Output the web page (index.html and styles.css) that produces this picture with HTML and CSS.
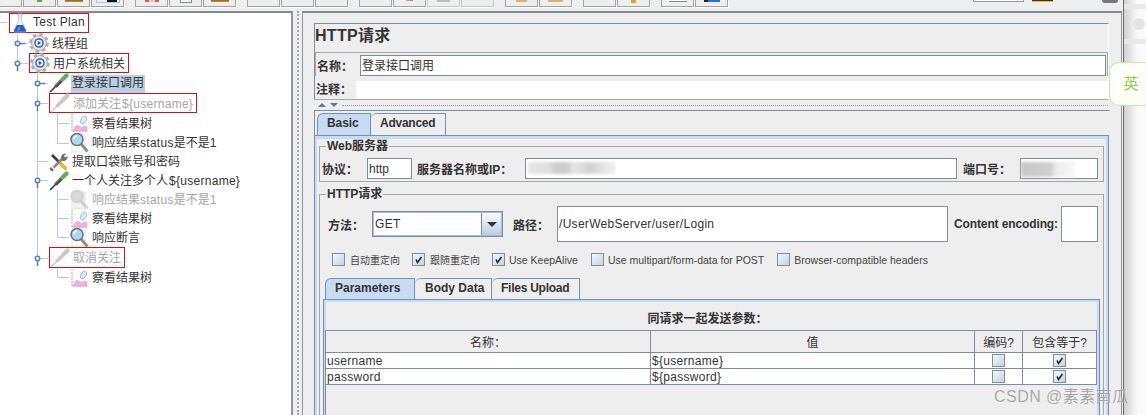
FILE: index.html
```html
<!DOCTYPE html>
<html lang="zh">
<head>
<meta charset="utf-8">
<title>HTTP请求</title>
<link rel="stylesheet" href="styles.css">
</head>
<body>
<svg class="sprite" aria-hidden="true">
  <symbol id="i-flask" viewBox="0 0 20 20">
    <path d="M7.500 1h5v1h-1v6l4.500 9c.6 1.200 0 2-1.500 2h-9C4 19 3.400 18.200 4 17l4.500-9V2h-1z" fill="#eef2f7" stroke="#b8c0cb" stroke-width=".8"/>
    <path d="M7 12h6l3 5.500c.3.800-.2 1.300-1 1.300H5c-.8 0-1.300-.5-1-1.300z" fill="#1c5fc9"/>
    <path d="M8.500 14h2l-1 3.500H7z" fill="#5c9ae8"/>
  </symbol>
  <symbol id="i-gear" viewBox="0 0 20 20">
    <circle cx="10" cy="10" r="8.200" fill="none" stroke="#b0b0b0" stroke-width="3.400" stroke-dasharray="3.400 3.040"/>
    <circle cx="10" cy="10" r="7.500" fill="#e4e4e4" stroke="#9a9a9a" stroke-width=".8"/>
    <circle cx="10" cy="10" r="4.800" fill="#3c68a6"/>
    <circle cx="10" cy="10" r="3.300" fill="#e3ecf8"/>
    <path d="M8.800 8l3.200 2-3.200 2z" fill="#2b568f"/>
  </symbol>
  <symbol id="i-pipette" viewBox="0 0 20 20">
    <path class="pp-needle" d="M1 19l7-7"/>
    <path class="pp-body" d="M6.500 13.500l6-6"/>
    <path class="pp-glint" d="M6 12.500l5-5"/>
    <path class="pp-bulb" d="M13.500 6.500l4-4"/>
  </symbol>
  <symbol id="i-tools" viewBox="0 0 20 20">
    <path d="M3 3l14 14" stroke="#3b3b3b" stroke-width="2.600" fill="none"/>
    <path d="M10.500 10.500l7 7" stroke="#e6bd1d" stroke-width="3.600" fill="none"/>
    <path d="M4.500 15.500l9-9" stroke="#8a8a8a" stroke-width="2.600" fill="none"/>
    <path d="M2 15l3 3-2 1.500-2.500-2.500zM12 6c0-3 2.500-5 5.500-4.500L15 4l1 1.500 2.500-1.500c.5 3-2 5.500-5 5z" fill="#6d6d6d"/>
  </symbol>
  <symbol id="i-graph" viewBox="-1 -1 20 20">
    <path d="M2 0v17h16" fill="none" stroke="#a9a9a9" stroke-dasharray="2 1"/>
    <path d="M3 17c2-5 4-7 6-5s4 2 4 1 3-1 4 0v4z" fill="#f3b0e6" stroke="#de8bcd" stroke-width=".5"/>
    <ellipse cx="13.500" cy="6" rx="2.600" ry="4.200" transform="rotate(28 13.500 6)" fill="#d8e8fb" stroke="#8fb0da" stroke-width=".8"/>
  </symbol>
  <symbol id="i-lens" viewBox="0 0 20 20">
    <rect class="ln-doc" x="3" y="2" width="13" height="17"/>
    <path class="ln-handle" d="M12 11l6.500 7.500"/>
    <circle class="ln-glass" cx="8" cy="6.500" r="6"/>
    <path class="ln-glint" d="M5 6c.5-2 1.500-3 3-3"/>
  </symbol>
  <symbol id="i-check" viewBox="0 0 13 13">
    <path d="M3.500 6.500l1.800 3.500L10 3.500" fill="none" stroke="#222" stroke-width="1.800"/>
  </symbol>
</svg>

<div class="screen">
  <div class="window">
    <div class="toolbar">
      <span class="tb tb-first"></span>
      <span class="tb"><i class="tip tip-green"></i></span>
      <span class="tb"><i class="tip tip-brown"></i></span>
      <span class="tb"><i class="tip tip-frame"></i></span>
      <span class="tb tb-sep"><i class="tip tip-red"></i></span>
      <span class="tb"><i class="tip tip-page"></i></span>
      <span class="tb"><i class="tip tip-brown"></i></span>
      <span class="tb tb-sep"></span>
      <span class="tb"></span>
      <span class="tb"></span>
      <span class="tb tb-sep"></span>
      <span class="tb"><i class="tip tip-mix"></i></span>
      <span class="tb tb-off"><i class="tip tip-grey"></i></span>
      <span class="tb tb-off"></span>
      <span class="tb tb-sep"><i class="tip tip-tan"></i></span>
      <span class="tb"><i class="tip tip-tan2"></i></span>
      <span class="tb tb-sep"></span>
      <span class="tb"><i class="tip tip-gold"></i></span>
      <span class="tb tb-sep"><i class="tip tip-white"></i></span>
      <span class="tb"><i class="tip tip-blue"></i></span>
      <span class="tray tray-input"></span>
      <span class="tray tray-yellow"></span>
      <span class="tray tray-round"></span>
    </div>

    <div class="content">
      <div class="tree">
        <svg class="tree-lines" viewBox="0 13 292 400" aria-hidden="true">
          <path class="guide" d="M0 22.500H7M17.500 33V63.500M17.500 43.500H28M17.500 63.500H28M37.500 73V258.500M37.500 83.500H48M37.500 103.500H48M37.500 161.500H48M37.500 180.500H48M37.500 258.500H48M57.500 113V143.500H69M57.500 123.500H69M57.500 190V237.500H69M57.500 199.500H69M57.500 218.500H69M57.500 268V277.500H69"/>
          <path class="stem" d="M17.500 43.500H25M17.500 63.500V71M37.500 83.500H45M37.500 103.500V111M37.500 180.500V188M37.500 258.500V266"/>
          <g class="knob">
            <circle cx="17.500" cy="43.500" r="2.200"/><circle cx="17.500" cy="63.500" r="2.200"/>
            <circle cx="37.500" cy="83.500" r="2.200"/><circle cx="37.500" cy="103.500" r="2.200"/>
            <circle cx="37.500" cy="180.500" r="2.200"/><circle cx="37.500" cy="258.500" r="2.200"/>
          </g>
        </svg>

        <div class="row tall lv0"><span class="node mark"><svg class="ico"><use href="#i-flask"/></svg><span class="label lat">Test Plan</span></span></div>
        <div class="row tall lv1"><span class="node"><svg class="ico"><use href="#i-gear"/></svg><span class="label">线程组</span></span></div>
        <div class="row tall lv1"><span class="node mark"><svg class="ico"><use href="#i-gear"/></svg><span class="label">用户系统相关</span></span></div>
        <div class="row tall lv2"><span class="node"><svg class="ico on"><use href="#i-pipette"/></svg><span class="label sel">登录接口调用</span></span></div>
        <div class="row tall lv2"><span class="node mark off"><svg class="ico"><use href="#i-pipette"/></svg><span class="label">添加关注<span class="lat var">${username}</span></span></span></div>
        <div class="row tall lv3"><span class="node"><svg class="ico"><use href="#i-graph"/></svg><span class="label">察看结果树</span></span></div>
        <div class="row lv3"><span class="node"><svg class="ico on"><use href="#i-lens"/></svg><span class="label">响应结果<span class="lat">status</span>是不是1</span></span></div>
        <div class="row lv2"><span class="node"><svg class="ico"><use href="#i-tools"/></svg><span class="label">提取口袋账号和密码</span></span></div>
        <div class="row lv2"><span class="node"><svg class="ico on"><use href="#i-pipette"/></svg><span class="label">一个人关注多个人<span class="lat var">${username}</span></span></span></div>
        <div class="row lv3"><span class="node off"><svg class="ico"><use href="#i-lens"/></svg><span class="label">响应结果<span class="lat">status</span>是不是1</span></span></div>
        <div class="row lv3"><span class="node"><svg class="ico"><use href="#i-graph"/></svg><span class="label">察看结果树</span></span></div>
        <div class="row lv3"><span class="node"><svg class="ico on"><use href="#i-lens"/></svg><span class="label">响应断言</span></span></div>
        <div class="row taller lv2"><span class="node mark off"><svg class="ico"><use href="#i-pipette"/></svg><span class="label">取消关注</span></span></div>
        <div class="row lv3"><span class="node"><svg class="ico"><use href="#i-graph"/></svg><span class="label">察看结果树</span></span></div>
      </div>

      <div class="split"></div>

      <div class="pane">
        <div class="head">
          <div class="title">HTTP请求</div>
          <div class="name-row">
            <span class="b name-label">名称：</span>
            <div class="field name-field">登录接口调用</div>
          </div>
          <div class="note-row">
            <span class="b note-label">注释：</span>
            <div class="note-field"></div>
          </div>
        </div>
        <div class="divider">
          <i class="tri tri-up"></i><i class="tri tri-down"></i><span class="dots"></span>
        </div>

        <div class="body">
          <div class="tabs tabs-top">
            <span class="tab active t-basic">Basic</span>
            <span class="tab t-adv">Advanced</span>
          </div>
          <div class="tabpanel">
            <div class="group group-web">
              <span class="legend">Web服务器</span>
              <div class="web-row">
                <span class="b w-proto">协议：</span>
                <div class="field f-proto">http</div>
                <span class="b w-host">服务器名称或IP：</span>
                <div class="field f-host"><i class="smudge smudge-host"></i></div>
                <span class="b w-port">端口号：</span>
                <div class="field f-port"><i class="smudge smudge-port"></i></div>
              </div>
            </div>

            <div class="group group-http">
              <span class="legend">HTTP请求</span>
              <div class="req-row">
                <span class="b w-method">方法：</span>
                <div class="select"><span class="select-val">GET</span><span class="select-btn"><i></i></span></div>
                <span class="b w-path">路径：</span>
                <div class="field f-path">/UserWebServer/user/Login</div>
                <span class="b w-enc">Content encoding:</span>
                <div class="field f-enc"></div>
              </div>
              <div class="opts">
                <label class="opt"><span class="cb"></span><span class="opt-zh">自动重定向</span></label>
                <label class="opt"><span class="cb"><svg><use href="#i-check"/></svg></span><span class="opt-zh">跟随重定向</span></label>
                <label class="opt"><span class="cb"><svg><use href="#i-check"/></svg></span>Use KeepAlive</label>
                <label class="opt"><span class="cb"></span>Use multipart/form-data for POST</label>
                <label class="opt"><span class="cb"></span>Browser-compatible headers</label>
              </div>

              <div class="inner">
                <div class="tabs tabs-inner">
                  <span class="tab active t-param">Parameters</span>
                  <span class="tab t-body">Body Data</span>
                  <span class="tab t-files">Files Upload</span>
                </div>
                <div class="tabpanel-inner">
                  <div class="b params-title">同请求一起发送参数：</div>
                  <div class="table-wrap">
                    <table class="params">
                      <thead>
                        <tr><th class="c-name">名称：</th><th class="c-val">值</th><th class="c-enc">编码?</th><th class="c-eq">包含等于?</th></tr>
                      </thead>
                      <tbody>
                        <tr><td>username</td><td>${username}</td><td><span class="cb"></span></td><td><span class="cb"><svg><use href="#i-check"/></svg></span></td></tr>
                        <tr><td>password</td><td>${password}</td><td><span class="cb"></span></td><td><span class="cb"><svg><use href="#i-check"/></svg></span></td></tr>
                      </tbody>
                    </table>
                  </div>
                </div>
              </div>
            </div>
          </div>
        </div>
      </div>
    </div>
  </div>

  <div class="desktop">
    <div class="d-bar"></div>
    <div class="d-dot"></div>
    <div class="d-bar"></div>
  </div>

  <div class="ime">英</div>
  <div class="watermark">CSDN @素素南瓜</div>
</div>
</body>
</html>
```

FILE: styles.css
```css
* { box-sizing: border-box; }
html, body { margin: 0; padding: 0; }
body {
  width: 1146px;
  height: 415px;
  overflow: hidden;
  font: 12px "Liberation Sans", "Noto Sans CJK SC", sans-serif;
  color: #333;
  background: #fff;
}
.sprite { display: none; }
.b { font-weight: bold; white-space: nowrap; }

.screen { position: relative; display: flex; width: 1146px; height: 415px; overflow: hidden; }
.window {
  width: 1124px;
  height: 415px;
  flex: none;
  display: flex;
  flex-direction: column;
  background: #eee;
  border-right: 1px solid #6b6b6b;
}

/* toolbar, clipped by the top of the picture */
.toolbar { position: relative; height: 11px; flex: none; display: flex; align-items: flex-start; gap: 1px; }
.tb {
  position: relative;
  width: 33px;
  height: 7px;
  flex: none;
  display: flex;
  justify-content: center;
  overflow: hidden;
  background: #eee;
  border: 1px solid #a2a2a2;
  border-top: 0;
  box-shadow: 1px 1px 0 #fff;
}
.tb-first { width: 22px; border-left: 0; }
.tb-sep { margin-left: 10px; }
.tb-off { border-color: #c6c6c6; }
.tip { display: block; width: 18px; height: 2px; }
.tip-green { width: 5px; background: #58a858; }
.tip-brown { background: linear-gradient(#8d5f14, #c19a55); }
.tip-frame { width: 24px; height: 3px; border: 1px solid #a9c4e0; border-top: 0; background: linear-gradient(90deg, #eee 45%, #111 45%, #111 90%, #eee 90%); }
.tip-red { width: 14px; background: linear-gradient(90deg, #d55 30%, #ccc 30%, #ccc 70%, #d55 70%); }
.tip-page { width: 12px; height: 3px; background: #f6f6f6; border: 1px solid #888; border-top: 0; }
.tip-mix { width: 7px; height: 1px; background: linear-gradient(90deg, #e88 50%, #88c 50%); }
.tip-grey { width: 13px; background: #bdbdbd; }
.tip-tan { width: 11px; background: #dcb078; }
.tip-tan2 { width: 15px; background: #dcb078; }
.tip-gold { width: 5px; height: 3px; background: #d8a81c; }
.tip-white { width: 18px; height: 2px; background: #fff; border-bottom: 1px solid #888; }
.tip-blue { width: 16px; background: linear-gradient(90deg, #222 25%, #2d6fd0 25%); }
.tray { position: absolute; top: 0; display: block; }
.tray-input { left: 973px; width: 51px; height: 2px; background: #fff; border: 1px solid #999; border-top: 0; }
.tray-yellow { left: 1032px; width: 21px; height: 2px; background: #3a3000; border-bottom: 1px solid #e8c030; }
.tray-round { left: 1102px; width: 16px; height: 3px; background: #777; border-radius: 0 0 8px 8px; }

.content { flex: 1; min-height: 0; display: flex; }

/* tree */
.tree {
  position: relative;
  width: 293px;
  flex: none;
  background: #fff;
  border-top: 2px solid #7f8c99;
  border-right: 2px solid #8b96a1;
}
.tree-lines { position: absolute; left: 0; top: 0; width: 292px; height: 400px; }
.guide { fill: none; stroke: #b5cbe2; stroke-width: 1; }
.stem { fill: none; stroke: #5b7dbb; stroke-width: 1.500; }
.knob circle { fill: #fff; stroke: #5b7dbb; stroke-width: 1.500; }

.row { position: relative; height: 19px; display: flex; white-space: nowrap; }
.tall { height: 20px; }
.taller { height: 21px; }
.lv0 { padding-left: 9px; }
.lv1 { padding-left: 29px; }
.lv2 { padding-left: 49px; }
.lv3 { padding-left: 69px; }
.node { display: flex; align-items: center; color: #333; }
.mark { border: 1px solid #e00d0d; padding-right: 3px; }
.label { margin-bottom: 2px; }
.lat { letter-spacing: .28px; }
.var { margin-left: 1px; }
.ico { width: 20px; height: 20px; margin-right: 3px; flex: none; --needle: #2d2d2d; --body: #4d4d4d; --glint: #a8a8a8; --bulb: #62ad62; --doc: #fff; --handle: #8d8d8d; --glass: #a6dcf3; --ring: #6f6f6f; --glintc: #fff; }
.off { color: #a6a6a6; }
.off .ico { --needle: #c8c8c8; --body: #c8c8c8; --glint: #dadada; --bulb: #c8c8c8; --doc: #f0f0f0; --handle: #cfcfcf; --glass: #d8d8d8; --ring: #cfcfcf; --glintc: #d8d8d8; }
.pp-needle { fill: none; stroke: var(--needle); stroke-width: 1.500; }
.pp-body { fill: none; stroke: var(--body); stroke-width: 3.600; }
.pp-glint { fill: none; stroke: var(--glint); stroke-width: 1; }
.pp-bulb { fill: none; stroke: var(--bulb); stroke-width: 4.200; stroke-linecap: round; }
.ln-doc { fill: var(--doc); stroke: #e4e4e4; }
.ln-handle { fill: none; stroke: var(--handle); stroke-width: 3; }
.ln-glass { fill: var(--glass); stroke: var(--ring); stroke-width: 1.500; }
.ln-glint { fill: none; stroke: var(--glintc); stroke-width: 1.500; }
.sel { height: 18px; line-height: 17px; margin: 2px 0 0 -1px; padding: 0 1px; background: #b8cfe5; align-self: flex-start; }

.split { width: 9px; flex: none; padding-left: 4px; }
.split::before { content: ""; display: block; height: 100%; border-left: 2px dotted #a8a8a8; }

/* right pane */
.pane {
  flex: 1;
  min-width: 0;
  margin-right: 1px;
  padding: 10px 12px 0 11px;
  border-top: 2px solid #7f8c99;
  border-left: 1px solid #8b96a1;
  border-right: 1px solid #8b96a1;
}
.head {
  height: 77px;
  display: flex;
  flex-direction: column;
  border: 1px solid #7f8c99;
  border-right-color: #fff;
  border-bottom-color: #a6a6a6;
}
.title { height: 28px; line-height: 24px; font-size: 16px; font-weight: bold; letter-spacing: .3px; }
.name-row { height: 24px; display: flex; align-items: center; padding: 1px 1px 0 1px; border: 1px solid #a6a6a6; border-bottom: 0; margin-right: 0; }
.name-label { width: 43px; }
.field {
  background: #fff;
  border: 1px solid #7f8c99;
  height: 21px;
  line-height: 21px;
  padding-left: 1px;
  white-space: nowrap;
  overflow: hidden;
}
.name-field { flex: 1; line-height: 20px; }
.note-row { height: 23px; display: flex; align-items: flex-end; padding-left: 1px; }
.note-label { width: 40px; height: 18px; line-height: 18px; }
.note-field { flex: 1; height: 18px; background: #fff; }

.divider { height: 10px; display: flex; align-items: center; gap: 4px; padding-left: 4px; }
.tri { width: 0; height: 0; border-left: 4px solid transparent; border-right: 4px solid transparent; flex: none; }
.tri-up { border-bottom: 4px solid #5a77ad; }
.tri-down { border-top: 4px solid #5a77ad; }
.dots { flex: 1; height: 0; border-top: 1px dotted #999; margin-right: 1px; }

.body { border-top: 1px solid #7f8c99; border-left: 1px solid #7f8c99; padding-top: 2px; }
.tabs { display: flex; align-items: flex-end; }
.tabs-top { height: 22px; padding-left: 2px; }
.tab {
  height: 22px;
  line-height: 19px;
  padding: 0 0 0 9px;
  font-weight: bold;
  white-space: nowrap;
  background: #eee;
  border: 1px solid #7b8fa8;
  border-bottom: 0;
  border-left: 0;
  border-radius: 6px 0 0 0;
}
.tab.active { background: #c8dcf1; border: 1px solid #6d8fc4; border-bottom: 0; }
.t-basic { width: 54px; letter-spacing: -.1px; }
.t-adv { width: 75px; letter-spacing: -.25px; }
.t-param { width: 90px; }
.t-body { width: 77px; padding-left: 10px; }
.t-files { width: 88px; letter-spacing: -.25px; }
.tabpanel {
  border: 1px solid #6d8fc4;
  border-left-width: 0;
  box-shadow: inset 2px 0 0 #c8dcf1, inset -2px 0 0 #c8dcf1;
  padding: 10px 4px 0 4px;
  background: linear-gradient(#c8dcf1 3px, #eee 3px);
}

.group { position: relative; border: 1px solid #a6a6a6; }
.group-http { margin-top: 12px; border-bottom: 0; height: 300px; }
.legend { position: absolute; left: 6px; top: -8px; height: 15px; line-height: 15px; padding: 0 1px; background: #eee; font-weight: bold; white-space: nowrap; }
.web-row { display: flex; align-items: center; height: 34px; padding: 11px 5px 2px 2px; }
.w-proto { width: 45px; }
.f-proto { width: 45px; }
.w-host { width: 108px; margin-left: 5px; }
.f-host { flex: 1; position: relative; }
.w-port { width: 57px; margin-left: 6px; }
.f-port { width: 78px; position: relative; overflow: visible; }
.smudge { position: absolute; display: block; filter: blur(1.500px); }
.smudge-host { left: 2px; top: 3px; width: 88px; height: 12px; background: linear-gradient(90deg, #e6e6e6, #dedede 25%, #cdcdcd 32%, #cdcdcd 45%, #e4e4e4 52%, #d2d2d2 70%, #e2e2e2 85%, #f2f2f2); }
.smudge-port { left: 0; top: 3px; width: 54px; height: 15px; background: linear-gradient(90deg, #c8c8c8, #cfcfcf 55%, #ececec 65%, #f8f8f8); }

.req-row { display: flex; align-items: center; height: 36px; margin-top: 11px; padding: 0 5px 0 8px; }
.w-method { width: 44px; }
.select {
  width: 131px;
  height: 26px;
  display: flex;
  background: #fff;
  border: 2px solid #a7bcd6;
  outline: 1px solid #7f8c99;
  outline-offset: -1px;
}
.select-val { flex: 1; line-height: 22px; padding-left: 1px; letter-spacing: .3px; }
.select-btn { width: 20px; display: flex; align-items: center; justify-content: center; background: linear-gradient(#fafcff, #bccde0); border-left: 1px solid #7f8c99; }
.select-btn i { width: 0; height: 0; border-left: 5px solid transparent; border-right: 5px solid transparent; border-top: 5px solid #333; }
.w-path { width: 44px; margin-left: 10px; }
.f-path { width: 391px; height: 36px; line-height: 34px; letter-spacing: .3px; }
.w-enc { width: 107px; margin-left: 6px; letter-spacing: -.12px; }
.f-enc { width: 37px; height: 36px; }

.opts { display: flex; align-items: center; gap: 13px; height: 13px; margin-top: 11px; padding-left: 12px; font-size: 10.500px; color: #444; white-space: nowrap; }
.opt { display: flex; align-items: center; gap: 4px; }
.opt-zh { font-size: 10px; margin: 0 -1px 0 1px; }
.cb {
  display: inline-block;
  width: 13px;
  height: 13px;
  flex: none;
  border: 1px solid #7f8c99;
  background: linear-gradient(135deg, #f4f7fb, #c4d3e4);
}
.cb svg { display: block; width: 11px; height: 11px; }

.inner { margin: 12px 3px 0 3px; }
.tabs-inner { height: 21px; padding-left: 2px; }
.tabs-inner .tab { height: 21px; }
.tabpanel-inner {
  border: 1px solid #6d8fc4;
  border-bottom: 0;
  box-shadow: inset 2px 2px 0 #c8dcf1, inset -2px 0 0 #c8dcf1;
  padding: 2px 3px 0 1px;
  height: 200px;
}
.params-title { height: 28px; line-height: 35px; text-align: center; padding-right: 6px; }
.table-wrap { height: 160px; border-left: 1px solid #7f8c99; }
.params { width: 771px; table-layout: fixed; border-collapse: collapse; margin-left: -1px; }
.params th, .params td { border: 1px solid #7f8c99; padding: 0; overflow: hidden; white-space: nowrap; }
.params th { height: 22px; font-weight: normal; background: #eee; }
.params td { height: 16px; background: #fff; padding-left: 1px; line-height: 14px; letter-spacing: .3px; }
.params td:nth-child(n+3) { text-align: center; padding-left: 0; line-height: 0; }
.c-name { width: 325px; }
.c-val { width: 324px; }
.c-enc { width: 48px; }
.c-eq { width: 74px; }

/* desktop behind the window */
.desktop { flex: 1; min-width: 0; padding-top: 4px; background: linear-gradient(90deg, #d0d0d0, #fafafa 60%); }
.d-bar { height: 5px; background: #e8e8e8; }
.d-dot { width: 12px; height: 12px; margin: 9px 0 9px 9px; border-radius: 50%; background: #e4e4e4; }

.ime {
  position: absolute;
  left: 1109px;
  top: 62px;
  width: 37px;
  height: 44px;
  padding-left: 6px;
  line-height: 42px;
  text-align: center;
  font-size: 15px;
  color: #8ed04c;
  background: #fbfff6;
  border: 1px solid #c5eaa4;
  border-right: 0;
  border-radius: 10px 0 0 10px;
}
.watermark {
  position: absolute;
  left: 994px;
  top: 387px;
  height: 20px;
  line-height: 20px;
  font-size: 16px;
  letter-spacing: .45px;
  white-space: nowrap;
  color: rgba(110, 110, 110, .6);
  text-shadow: 0 0 1px rgba(255, 255, 255, .8);
}
```
